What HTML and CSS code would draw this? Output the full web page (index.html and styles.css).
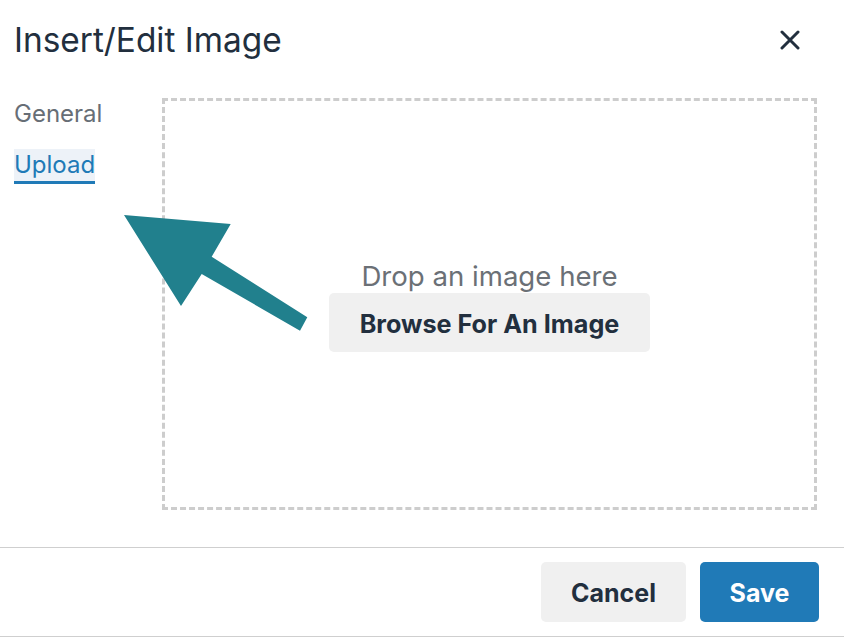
FILE: index.html
```html
<!DOCTYPE html>
<html lang="en">
<head>
<meta charset="utf-8">
<title>Insert/Edit Image</title>
<link rel="stylesheet" href="styles.css">
</head>
<body>
<div class="dialog">
  <header class="header">
    <h1 class="title">Insert/Edit Image</h1>
    <button class="close" aria-label="Close">
      <svg viewBox="0 0 20 20" width="20" height="20"><path d="M2 2 L18 18 M18 2 L2 18" stroke="#222f3e" stroke-width="3" stroke-linecap="round" fill="none"/></svg>
    </button>
  </header>
  <main class="main">
    <nav class="tabs">
      <span class="tab">General</span>
      <span class="tab active">Upload</span>
    </nav>
    <section class="dropzone">
      <p class="drop-text">Drop an image here</p>
      <button class="btn secondary browse">Browse For An Image</button>
    </section>
  </main>
  <footer class="footer">
    <button class="btn secondary action">Cancel</button>
    <button class="btn primary action">Save</button>
  </footer>
  <svg class="arrow" width="844" height="637" viewBox="0 0 844 637">
    <polygon points="124,215 230.7,224 211.7,256.7 307.3,317.3 300,330.7 201.7,274 181,306" fill="#21808d"/>
  </svg>
</div>
</body>
</html>
```
FILE: styles.css
```css
* { box-sizing: border-box; }
html, body { margin: 0; padding: 0; background: #fff; }
body {
  font-family: Inter, "Noto Sans", "Liberation Sans", sans-serif;
  color: #222f3e;
}
.dialog {
  position: relative;
  width: 844px;
  height: 637px;
  display: flex;
  flex-direction: column;
  border-bottom: 1px solid #cfcfcf;
}
.header {
  display: flex;
  justify-content: space-between;
  align-items: center;
  padding: 20px 44px 0 14px;
  height: 60px;
}
.title {
  margin: 0;
  font-size: 33.4px;
  line-height: 40px;
  font-weight: 400;
  color: #222f3e;
}
.close {
  border: 0;
  background: none;
  padding: 0;
  width: 20px;
  height: 20px;
  display: flex;
}
.main {
  display: flex;
  padding: 38px 27px 0 14px;
}
.tabs {
  flex: 0 0 148px;
  display: flex;
  flex-direction: column;
  align-items: flex-start;
  gap: 19px;
}
.tab {
  font-size: 24px;
  line-height: 32px;
  color: #676e76;
}
.tab.active {
  color: #207ab7;
  background: #edf2f8;
  border-bottom: 3px solid #207ab7;
}
.dropzone {
  flex: 1;
  height: 412px;
  border: 3px dashed #cdcdcd;
  display: flex;
  flex-direction: column;
  align-items: center;
  justify-content: center;
  padding-top: 5px;
}
.drop-text {
  margin: 0 0 2px;
  font-size: 27.6px;
  line-height: 30px;
  color: #6b7076;
}
.btn {
  border: 0;
  font-family: inherit;
  font-weight: 700;
  border-radius: 5px;
  cursor: pointer;
}
.secondary { background: #f0f0f0; color: #222f3e; }
.primary { background: #207ab7; color: #fff; }
.browse {
  width: 321px;
  height: 59px;
  font-size: 25.2px;
  padding-top: 3px;
}
.footer {
  margin-top: 37px;
  border-top: 1px solid #cfcfcf;
  display: flex;
  justify-content: flex-end;
  gap: 14px;
  padding: 14px 25px 0 0;
}
.action {
  height: 60px;
  font-size: 25px;
  padding-top: 2px;
}
.action.secondary { width: 145px; }
.action.primary { width: 119px; }
.arrow {
  position: absolute;
  left: 0;
  top: 0;
  pointer-events: none;
}
```
